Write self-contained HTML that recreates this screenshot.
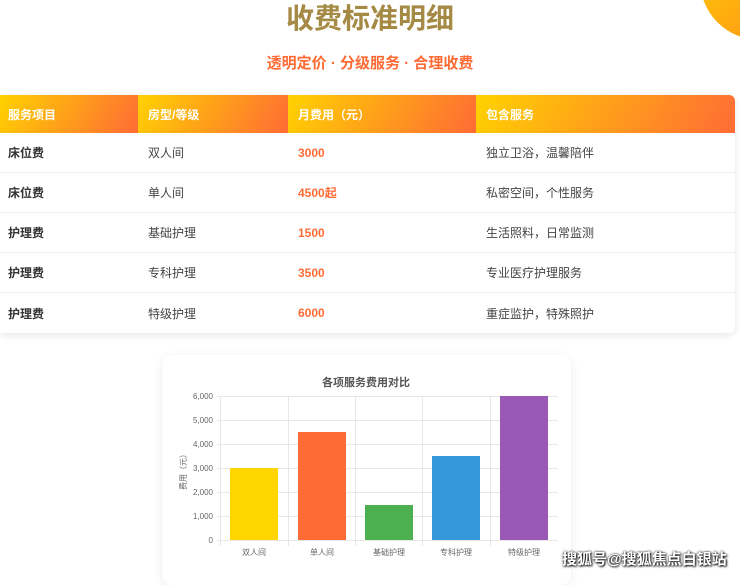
<!DOCTYPE html>
<html><head><meta charset="utf-8"><style>
*{margin:0;padding:0;box-sizing:border-box}
body{width:740px;height:574px;overflow:hidden;background:#fff;font-family:"Liberation Sans","Noto Sans CJK SC",sans-serif;position:relative}
.circle{position:absolute;left:700px;top:-80px;width:120px;height:120px;border-radius:50%;background:linear-gradient(135deg,#ffd200,#ff8a1f)}
h1{position:absolute;top:0;left:0;width:740px;text-align:center;font-size:28px;font-weight:bold;color:#a58a45;line-height:38px}
.sub{position:absolute;top:53px;left:0;width:740px;text-align:center;font-size:15px;font-weight:bold;color:#ff6b35;line-height:22px}
.tbl{position:absolute;left:0;top:95px;width:735px;border-radius:0 6px 6px 0;box-shadow:0 2px 8px rgba(0,0,0,.1);overflow:hidden;background:#fff}
.row{display:flex;height:40px;align-items:center;border-bottom:1px solid #eee;font-size:12px;color:#444}
.row:last-child{border-bottom:none}
.row div{height:100%;display:flex;align-items:center;padding-left:8px}
.c1{width:138px;font-weight:bold;color:#333}.c2{width:150px;padding-left:10px!important}.c3{width:188px;padding-left:10px!important;color:#ff6b35;font-weight:bold}.c4{flex:1;padding-left:10px!important}
.hd{height:38px;border:none}
.hd div{background:linear-gradient(120deg,#ffd200,#ff6b35);color:#fff;font-weight:bold}
.card{position:absolute;left:162px;top:355px;width:409px;height:230px;border-radius:10px;background:#fff;box-shadow:0 2px 10px rgba(0,0,0,.08)}
.wm{position:absolute;left:562px;top:548px;font-size:15px;color:#fff;font-weight:bold;text-shadow:0 0 2px #000,1px 1px 2px #000}
</style></head><body>
<div class="circle"></div>
<h1>收费标准明细</h1>
<div class="sub">透明定价 · 分级服务 · 合理收费</div>
<div class="tbl">
<div class="row hd"><div class="c1" style="color:#fff">服务项目</div><div class="c2">房型/等级</div><div class="c3" style="color:#fff">月费用（元）</div><div class="c4">包含服务</div></div>
<div class="row"><div class="c1">床位费</div><div class="c2">双人间</div><div class="c3">3000</div><div class="c4">独立卫浴，温馨陪伴</div></div>
<div class="row"><div class="c1">床位费</div><div class="c2">单人间</div><div class="c3">4500起</div><div class="c4">私密空间，个性服务</div></div>
<div class="row"><div class="c1">护理费</div><div class="c2">基础护理</div><div class="c3">1500</div><div class="c4">生活照料，日常监测</div></div>
<div class="row"><div class="c1">护理费</div><div class="c2">专科护理</div><div class="c3">3500</div><div class="c4">专业医疗护理服务</div></div>
<div class="row"><div class="c1">护理费</div><div class="c2">特级护理</div><div class="c3">6000</div><div class="c4">重症监护，特殊照护</div></div>
</div>
<div class="card"></div>
<svg style="position:absolute;left:0;top:0" width="740" height="574" font-family="Liberation Sans, Noto Sans CJK SC, sans-serif">
<text x="366" y="386" text-anchor="middle" font-size="11" font-weight="bold" fill="#555">各项服务费用对比</text>
<g stroke="#e6e6e6" stroke-width="1">
<line x1="217" y1="396.5" x2="558" y2="396.5"/><line x1="217" y1="420.5" x2="558" y2="420.5"/><line x1="217" y1="444.5" x2="558" y2="444.5"/><line x1="217" y1="468.5" x2="558" y2="468.5"/><line x1="217" y1="492.5" x2="558" y2="492.5"/><line x1="217" y1="516.5" x2="558" y2="516.5"/><line x1="217" y1="540.5" x2="558" y2="540.5"/>
<line x1="220.5" y1="396" x2="220.5" y2="546"/><line x1="288.5" y1="396" x2="288.5" y2="546"/><line x1="355.5" y1="396" x2="355.5" y2="546"/><line x1="422.5" y1="396" x2="422.5" y2="546"/><line x1="490.5" y1="396" x2="490.5" y2="546"/>
</g>
<g font-size="8" fill="#666" text-anchor="end">
<text x="213" y="399">6,000</text><text x="213" y="423">5,000</text><text x="213" y="447">4,000</text><text x="213" y="471">3,000</text><text x="213" y="495">2,000</text><text x="213" y="519">1,000</text><text x="213" y="543">0</text>
</g>
<text transform="translate(186,470) rotate(-90)" font-size="8" fill="#666" text-anchor="middle">费用（元）</text>
<rect x="230" y="468" width="48" height="72" fill="#ffd600"/>
<rect x="298" y="432" width="48" height="108" fill="#ff6b35"/>
<rect x="365" y="505" width="48" height="35" fill="#4caf50"/>
<rect x="432" y="456" width="48" height="84" fill="#3498db"/>
<rect x="500" y="396" width="48" height="144" fill="#9b59b6"/>
<g font-size="8" fill="#666" text-anchor="middle">
<text x="254" y="555">双人间</text><text x="322" y="555">单人间</text><text x="389" y="555">基础护理</text><text x="456" y="555">专科护理</text><text x="524" y="555">特级护理</text>
</g>
</svg>
<div class="wm">搜狐号@搜狐焦点白银站</div>
</body></html>
